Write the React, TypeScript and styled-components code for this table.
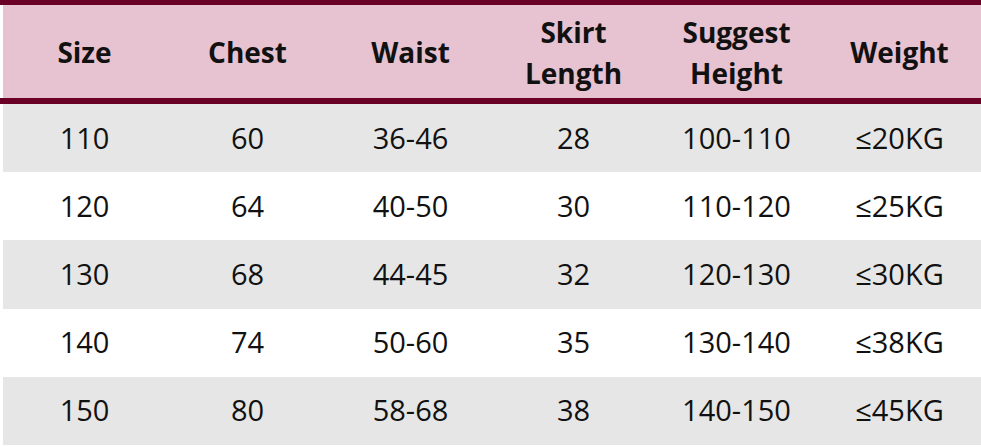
import styled, { createGlobalStyle } from "styled-components";

const GlobalStyle = createGlobalStyle`
  html, body {
    margin: 0;
    padding: 0;
    background: #fff;
  }
  body {
    font-family: "Open Sans", "Noto Sans", "Liberation Sans", sans-serif;
    color: #111;
  }
`;

const Page = styled.div`
  width: 981px;
  height: 447px;
`;

const HeadRow = styled.div`
  display: grid;
  grid-template-columns: repeat(6, 1fr);
  border-top: 5px solid #6a0026;
  border-bottom: 6px solid #6a0026;
  padding-left: 3px;
`;

const HeadCell = styled.div`
  height: 93px;
  background: #e7c2d0;
  display: flex;
  align-items: center;
  justify-content: center;
  text-align: center;
  font-weight: 700;
  font-size: 28px;
  line-height: 41px;
  padding-top: 2px;
  box-sizing: border-box;
`;

const Row = styled.div<{ $shade: boolean }>`
  display: grid;
  grid-template-columns: repeat(6, 1fr);
  height: 68.2px;
  margin-left: 3px;
  background: ${(p) => (p.$shade ? "#e6e6e6" : "#fff")};
`;

const Cell = styled.div`
  display: flex;
  align-items: center;
  justify-content: center;
  font-size: 29px;
  padding-bottom: 2px;
  box-sizing: border-box;
`;

const headers = ["Size", "Chest", "Waist", "Skirt\nLength", "Suggest\nHeight", "Weight"];

const rows = [
  ["110", "60", "36-46", "28", "100-110", "≤20KG"],
  ["120", "64", "40-50", "30", "110-120", "≤25KG"],
  ["130", "68", "44-45", "32", "120-130", "≤30KG"],
  ["140", "74", "50-60", "35", "130-140", "≤38KG"],
  ["150", "80", "58-68", "38", "140-150", "≤45KG"],
];

const App = () => {
  return (
    <>
      <GlobalStyle />
      <Page>
        <HeadRow>
          {headers.map((h) => (
            <HeadCell key={h}>
              <span>
                {h.split("\n").map((line, i) => (
                  <div key={i}>{line}</div>
                ))}
              </span>
            </HeadCell>
          ))}
        </HeadRow>
        {rows.map((row, r) => (
          <Row key={row[0]} $shade={r % 2 === 0}>
            {row.map((val, c) => (
              <Cell key={c}>{val}</Cell>
            ))}
          </Row>
        ))}
      </Page>
    </>
  );
};

export default App;
